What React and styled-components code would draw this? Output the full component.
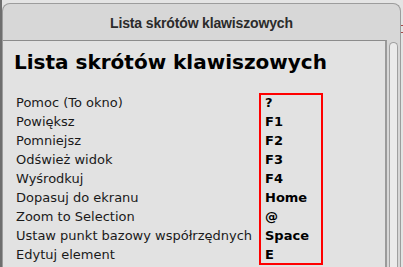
import styled, { createGlobalStyle } from "styled-components";

const GlobalStyle = createGlobalStyle`
    html, body {
        margin: 0;
        padding: 0;
        width: 403px;
        height: 267px;
        overflow: hidden;
    }
`;

const shortcuts = [
    { label: "Pomoc (To okno)", keyName: "?" },
    { label: "Powiększ", keyName: "F1" },
    { label: "Pomniejsz", keyName: "F2" },
    { label: "Odśwież widok", keyName: "F3" },
    { label: "Wyśrodkuj", keyName: "F4" },
    { label: "Dopasuj do ekranu", keyName: "Home" },
    { label: "Zoom to Selection", keyName: "@" },
    { label: "Ustaw punkt bazowy współrzędnych", keyName: "Space" },
    { label: "Edytuj element", keyName: "E" },
];

const App = () => {
    return (
        <>
            <GlobalStyle />
            <Desktop>
                <Window>
                    <TitleBar>Lista skrótów klawiszowych</TitleBar>
                    <Body>
                        <Panel>
                            <Heading>Lista skrótów klawiszowych</Heading>
                            <ShortcutList>
                                <LabelColumn>
                                    {shortcuts.map((s) => (
                                        <Row key={s.label}>{s.label}</Row>
                                    ))}
                                </LabelColumn>
                                <KeyBox>
                                    {shortcuts.map((s) => (
                                        <Row key={s.label} $bold>
                                            {s.keyName}
                                        </Row>
                                    ))}
                                </KeyBox>
                            </ShortcutList>
                        </Panel>
                        <ScrollTrack />
                    </Body>
                </Window>
            </Desktop>
        </>
    );
};

export default App;

const Desktop = styled.div`
    width: 403px;
    height: 267px;
    box-sizing: border-box;
    padding-top: 3px;
    border-left: 2px solid #6e6e6e;
    background:
        linear-gradient(to bottom, transparent 25px, #a84848 25px, #a84848 26px, transparent 26px),
        linear-gradient(to bottom, transparent 32px, #a84848 32px, #a84848 33px, transparent 33px),
        #e4e4e4;
    overflow: hidden;
`;

const Window = styled.div`
    width: 399px;
    height: 270px;
    box-sizing: border-box;
    border: 1px solid #9c9c9c;
    border-bottom: none;
    border-radius: 8px 8px 0 0;
    background: #d7d7d7;
    display: flex;
    flex-direction: column;
`;

const TitleBar = styled.div`
    height: 36px;
    display: flex;
    align-items: center;
    justify-content: center;
    padding-top: 1px;
    box-sizing: border-box;
    font-family: "Liberation Sans", Arial, sans-serif;
    font-weight: bold;
    font-size: 14px;
    letter-spacing: -0.15px;
    color: #2b2b2b;
`;

const Body = styled.div`
    flex: 1;
    display: flex;
    background: #d7d7d7;
`;

const Panel = styled.div`
    width: 384px;
    box-sizing: border-box;
    border-top: 1px solid #8c8c8c;
    border-right: 2px solid #9a9a9a;
    background: #e2e2e2;
    padding: 9px 0 0 11px;
`;

const Heading = styled.h1`
    margin: 0;
    font-family: "DejaVu Sans", sans-serif;
    font-weight: bold;
    font-size: 20px;
    line-height: 24px;
    color: #000;
`;

const ShortcutList = styled.div`
    display: flex;
    margin: 19px 0 0 2px;
`;

const LabelColumn = styled.div`
    width: 243px;
    padding-top: 2px;
`;

const KeyBox = styled.div`
    width: 64px;
    height: 172px;
    box-sizing: border-box;
    border: 2px solid #ff0000;
    padding-left: 4px;
`;

const Row = styled.div`
    height: 19px;
    line-height: 15px;
    font-family: "DejaVu Sans", sans-serif;
    font-size: 13px;
    font-weight: ${(p) => (p.$bold ? "bold" : "normal")};
    color: ${(p) => (p.$bold ? "#000" : "#1a1a1a")};
    white-space: nowrap;
`;

const ScrollTrack = styled.div`
    width: 9px;
    margin: 2px 1px 0 2px;
    box-sizing: border-box;
    border: 1px solid #a0a0a0;
    border-bottom: none;
    border-radius: 5px 5px 0 0;
    background: #ebebeb;
`;
